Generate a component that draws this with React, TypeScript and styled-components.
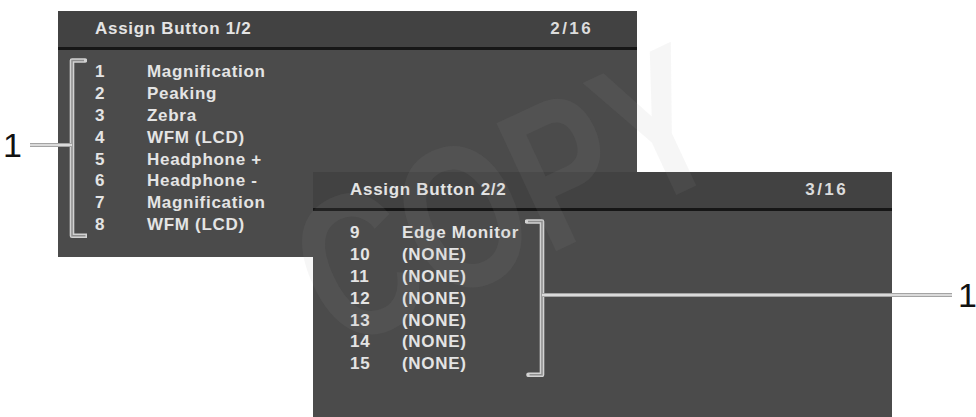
import React from 'react';
import styled, { createGlobalStyle } from 'styled-components';

type Item = { no: number; label: string };

const ROW_H = 21.9;

const firstPage: Item[] = [
  { no: 1, label: 'Magnification' },
  { no: 2, label: 'Peaking' },
  { no: 3, label: 'Zebra' },
  { no: 4, label: 'WFM (LCD)' },
  { no: 5, label: 'Headphone +' },
  { no: 6, label: 'Headphone -' },
  { no: 7, label: 'Magnification' },
  { no: 8, label: 'WFM (LCD)' },
];

const secondPage: Item[] = [
  { no: 9, label: 'Edge Monitor' },
  { no: 10, label: '(NONE)' },
  { no: 11, label: '(NONE)' },
  { no: 12, label: '(NONE)' },
  { no: 13, label: '(NONE)' },
  { no: 14, label: '(NONE)' },
  { no: 15, label: '(NONE)' },
];

const GlobalStyle = createGlobalStyle`
  html, body {
    margin: 0;
    padding: 0;
    background: #ffffff;
  }
  body {
    font-family: "Liberation Sans", Arial, sans-serif;
  }
`;

const Canvas = styled.div`
  position: relative;
  width: 976px;
  height: 417px;
  overflow: hidden;
  background: #ffffff;
  display: flex;
  flex-direction: column;
  align-items: flex-start;
`;

const Screen = styled.section<{ $left: number; $top: number }>`
  position: relative;
  flex: none;
  box-sizing: border-box;
  width: 579px;
  height: 246px;
  margin-left: ${(p) => p.$left}px;
  margin-top: ${(p) => p.$top}px;
  background: #4b4b4b;
  color: #e4e4e4;
  font-family: "Liberation Sans", Arial, sans-serif;
  font-weight: 700;
  font-size: 17px;
  letter-spacing: 0.7px;
  display: flex;
  flex-direction: column;
`;

const Header = styled.header`
  height: 36px;
  padding: 0 44px 0 37px;
  display: flex;
  align-items: center;
  justify-content: space-between;
  background: #424242;
  border-bottom: 3px solid #161616;
`;

const Title = styled.span`
  white-space: nowrap;
`;

const PageCount = styled.span`
  letter-spacing: 2.4px;
  color: #dcdcdc;
`;

const Body = styled.div<{ $padLeft: number }>`
  display: flex;
  align-items: flex-start;
  padding: 11px 0 0 ${(p) => p.$padLeft}px;
`;

const List = styled.ol<{ $width?: number }>`
  list-style: none;
  margin: 0;
  padding: 0;
  flex: none;
  width: ${(p) => (p.$width ? `${p.$width}px` : 'auto')};
  display: flex;
  flex-direction: column;
`;

const Row = styled.li`
  display: grid;
  grid-template-columns: 52px auto;
  height: ${ROW_H}px;
  line-height: ${ROW_H}px;
  white-space: nowrap;
`;

const Num = styled.span``;

const Label = styled.span``;

const BracketWrap = styled.div<{ $width: number; $gap: number }>`
  position: relative;
  flex: none;
  width: ${(p) => p.$width}px;
  margin-top: -3px;
  margin-right: ${(p) => p.$gap}px;
`;

const Callout = styled.div<{ $side: 'left' | 'right'; $offset: number }>`
  position: absolute;
  top: ${(p) => p.$offset}px;
  ${(p) => (p.$side === 'left' ? 'right: 15px;' : 'left: 17px;')}
  display: flex;
  align-items: center;
  gap: ${(p) => (p.$side === 'left' ? 8 : 6)}px;
  transform: translateY(-50%);
`;

const Leader = styled.div<{ $length: number }>`
  width: ${(p) => p.$length}px;
  height: 1.5px;
  background: #dadada;
  border-top: 1.25px solid #a4a4a4;
  border-bottom: 1.25px solid #a4a4a4;
`;

const CalloutNumber = styled.span`
  font-family: "Liberation Sans", Arial, sans-serif;
  font-weight: 400;
  font-size: 34px;
  line-height: 34px;
  color: #111111;
  letter-spacing: 0;
`;

/* faint "COPY" stamp laid across both screens */
const Watermark = styled.div`
  position: absolute;
  left: 505px;
  top: 196px;
  transform: translate(-50%, -50%) rotate(-25deg) scaleX(0.75);
  font-family: "Liberation Sans", Arial, sans-serif;
  font-weight: 700;
  font-size: 205px;
  line-height: 1;
  white-space: nowrap;
  color: rgba(150, 150, 150, 0.09);
  pointer-events: none;
  user-select: none;
`;

type BracketProps = {
  side: 'left' | 'right';
  rows: number;
  leaderLength: number;
};

function Bracket({ side, rows, leaderLength }: BracketProps) {
  const width = side === 'left' ? 18 : 20;
  const h = rows * ROW_H + 5;
  const top = 2.5;
  const bottom = h - 2.5;
  const d =
    side === 'left'
      ? `M 16 ${top} H 3 V ${bottom} H 17.5`
      : `M 2 ${top} H 17 V ${bottom} H 3.5`;
  const inner =
    side === 'left'
      ? `M 15 ${top} H 3 V ${bottom} H 16.5`
      : `M 3 ${top} H 17 V ${bottom} H 4.5`;
  return (
    <BracketWrap $width={width} $gap={side === 'left' ? 8 : 0}>
      <svg width={width} height={h} viewBox={`0 0 ${width} ${h}`} style={{ display: 'block' }}>
        <path d={d} fill="none" stroke="#d2d2d2" strokeWidth={4.6} strokeLinejoin="round" strokeLinecap="round" />
        <path d={inner} fill="none" stroke="#8e8e8e" strokeWidth={1.5} strokeLinejoin="miter" />
      </svg>
      <Callout $side={side} $offset={h / 2 - 3}>
        {side === 'left' ? (
          <>
            <CalloutNumber>1</CalloutNumber>
            <Leader $length={leaderLength} />
          </>
        ) : (
          <>
            <Leader $length={leaderLength} />
            <CalloutNumber>1</CalloutNumber>
          </>
        )}
      </Callout>
    </BracketWrap>
  );
}

function Items({ items, width }: { items: Item[]; width?: number }) {
  return (
    <List $width={width}>
      {items.map((it) => (
        <Row key={it.no}>
          <Num>{it.no}</Num>
          <Label>{it.label}</Label>
        </Row>
      ))}
    </List>
  );
}

export default function App() {
  return (
    <>
      <GlobalStyle />
      <Canvas>
        <Screen $left={58} $top={11}>
          <Header>
            <Title>Assign Button 1/2</Title>
            <PageCount>2/16</PageCount>
          </Header>
          <Body $padLeft={11}>
            <Bracket side="left" rows={firstPage.length} leaderLength={42} />
            <Items items={firstPage} />
          </Body>
        </Screen>
        <Screen $left={313} $top={-85}>
          <Header>
            <Title>Assign Button 2/2</Title>
            <PageCount>3/16</PageCount>
          </Header>
          <Body $padLeft={37}>
            <Items items={secondPage} width={175} />
            <Bracket side="right" rows={secondPage.length} leaderLength={410} />
          </Body>
        </Screen>
        <Watermark aria-hidden="true">COPY</Watermark>
      </Canvas>
    </>
  );
}
